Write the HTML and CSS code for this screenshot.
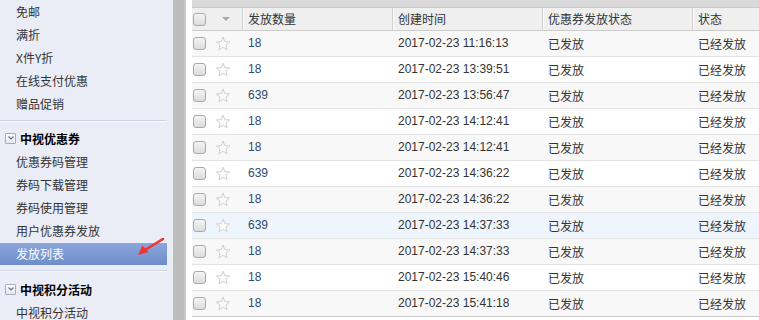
FILE: index.html
```html
<!DOCTYPE html>
<html>
<head>
<meta charset="utf-8">
<link rel="stylesheet" href="styles.css">
</head>
<body>
<div class="page">
  <aside class="sidebar">
    <ul class="menu">
      <li class="item">免邮</li>
      <li class="item">满折</li>
      <li class="item">X件Y折</li>
      <li class="item">在线支付优惠</li>
      <li class="item">赠品促销</li>
    </ul>
    <div class="sep"></div>
    <div class="group"><span class="toggle"><svg width="6" height="4" viewBox="0 0 6 4"><path d="M0.5 0.5 L3 3 L5.5 0.5" fill="none" stroke="#6a7080" stroke-width="1.2"/></svg></span>中视优惠券</div>
    <ul class="menu">
      <li class="item">优惠券码管理</li>
      <li class="item">券码下载管理</li>
      <li class="item">券码使用管理</li>
      <li class="item">用户优惠券发放</li>
      <li class="item active">发放列表</li>
    </ul>
    <div class="sep sep2"></div>
    <div class="group group2"><span class="toggle"><svg width="6" height="4" viewBox="0 0 6 4"><path d="M0.5 0.5 L3 3 L5.5 0.5" fill="none" stroke="#6a7080" stroke-width="1.2"/></svg></span>中视积分活动</div>
    <ul class="menu">
      <li class="item">中视积分活动</li>
    </ul>
    <svg class="arrow" width="30" height="20" viewBox="0 0 30 20">
      <path d="M27 1 L9 12" stroke="#f03535" stroke-width="2.6" stroke-linecap="round"/>
      <path d="M2 17 L6.5 7.5 L12.5 14 Z" fill="#f03535"/>
    </svg>
  </aside>
  <div class="splitter"></div>
  <main class="main">
    <div class="topband"></div>
    <div class="row head">
      <div class="cell chk"><span class="box"></span></div>
      <div class="cell star"><span class="caret"></span></div>
      <div class="cell col">发放数量</div>
      <div class="cell col">创建时间</div>
      <div class="cell col">优惠券发放状态</div>
      <div class="cell col">状态</div>
    </div>
    <div id="rows"></div>
  </main>
</div>
<script>
var data=[["18","11:16:13"],["18","13:39:51"],["639","13:56:47"],["18","14:12:41"],["18","14:12:41"],["639","14:36:22"],["18","14:36:22"],["639","14:37:33"],["18","14:37:33"],["18","15:40:46"],["18","15:41:18"]];
var star='<svg width="16" height="16" viewBox="0 0 16 16"><path d="M8 1.2 L9.9 5.6 L14.6 6 L11 9.1 L12.1 13.8 L8 11.3 L3.9 13.8 L5 9.1 L1.4 6 L6.1 5.6 Z" fill="#fbfbfb" stroke="#cfcfcf" stroke-width="1" stroke-linejoin="round"/></svg>';
var h='';
data.forEach(function(d,i){
  var cls='row body'+(i%2===0?' odd':'')+(i===7?' hover':'')+(i===data.length-1?' last':'');
  h+='<div class="'+cls+'"><div class="cell chk"><span class="box"></span></div><div class="cell star">'+star+'</div><div class="cell col num">'+d[0]+'</div><div class="cell col date">2017-02-23 '+d[1]+'</div><div class="cell col">已发放</div><div class="cell col">已经发放</div></div>';
});
document.getElementById('rows').innerHTML=h;
</script>
</body>
</html>
```
FILE: styles.css
```css
html, body {
  margin: 0;
  padding: 0;
  width: 759px;
  height: 320px;
  overflow: hidden;
  background: #fff;
  font-family: "Noto Sans CJK SC", "Liberation Sans", sans-serif;
  font-size: 12px;
  color: #333;
}
.page {
  display: flex;
  height: 320px;
}
.sidebar {
  position: relative;
  width: 167px;
  padding-right: 6px;
  background: #eaedf5;
  flex: none;
}
.menu {
  list-style: none;
  margin: 0;
  padding: 0;
}
.item {
  height: 23px;
  line-height: 23px;
  padding-left: 16px;
  color: #333;
  white-space: nowrap;
}
.item.active {
  height: 22px;
  line-height: 22px;
  margin-top: 1px;
  background: linear-gradient(#8ca6db, #6f8dcb);
  color: #fff;
}
.sep {
  margin-top: 5px;
  border-top: 1px solid #cdd5e4;
  border-bottom: 1px solid #f8f9fc;
  height: 0;
}
.sep2 {
  margin-top: 5px;
}
.group {
  display: flex;
  align-items: center;
  margin-top: 4px;
  height: 24px;
  padding-left: 5px;
  font-weight: bold;
  color: #000;
  font-size: 12px;
}
.group2 {
  margin-top: 5px;
}
.toggle {
  width: 9px;
  height: 9px;
  border: 1px solid #a3abbc;
  border-radius: 1px;
  background: linear-gradient(#ffffff, #e3e6ee);
  margin-right: 4px;
  display: flex;
  align-items: center;
  justify-content: center;
}
.arrow {
  position: absolute;
  left: 136px;
  top: 238px;
}
.splitter {
  width: 11px;
  flex: none;
  background: #bcbcbc;
  border-right: 2px solid #c8c8c8;
}
.main {
  flex: 1;
  margin-left: 6px;
  min-width: 0;
}
.topband {
  height: 7px;
  background: #d9d9d9;
  border-bottom: 1px solid #c9c9c9;
}
.row {
  display: grid;
  grid-template-columns: 20px 30px 150px 150px 150px 1fr;
  align-items: center;
}
.head {
  height: 22px;
  background: #efefef;
  border-bottom: 1px solid #cccccc;
}
.head .col {
  height: 22px;
  line-height: 21px;
  border-left: 1px solid #d0d0d0;
  box-shadow: inset 1px 0 0 #fafafa;
  padding-left: 5px;
}
.body {
  height: 25px;
  border-bottom: 1px solid #e3e3e3;
  background: #fff;
}
.body.odd {
  background: #f8f8f8;
}
.body.hover {
  background: #eef5fd;
}
.body.last {
  border-bottom-color: #c9c9c9;
}
.cell {
  white-space: nowrap;
  overflow: hidden;
}
.body .col {
  padding-left: 6px;
  line-height: 25px;
}
.chk {
  display: flex;
  align-items: center;
  padding-left: 1px;
}
.box {
  display: block;
  width: 11px;
  height: 11px;
  border: 1px solid #a9a9a9;
  border-radius: 3px;
  background: linear-gradient(#f4f4f4, #dcdcdc);
}
.star {
  display: flex;
  align-items: center;
  padding-left: 3px;
}
.caret {
  display: block;
  width: 0;
  height: 0;
  margin-left: 7px;
  border-left: 4px solid transparent;
  border-right: 4px solid transparent;
  border-top: 4px solid #aaaaaa;
}
.num {
  font-family: "Liberation Sans", sans-serif;
  color: #2e4b72;
}
.date {
  font-family: "Liberation Sans", sans-serif;
  color: #333;
}
```
